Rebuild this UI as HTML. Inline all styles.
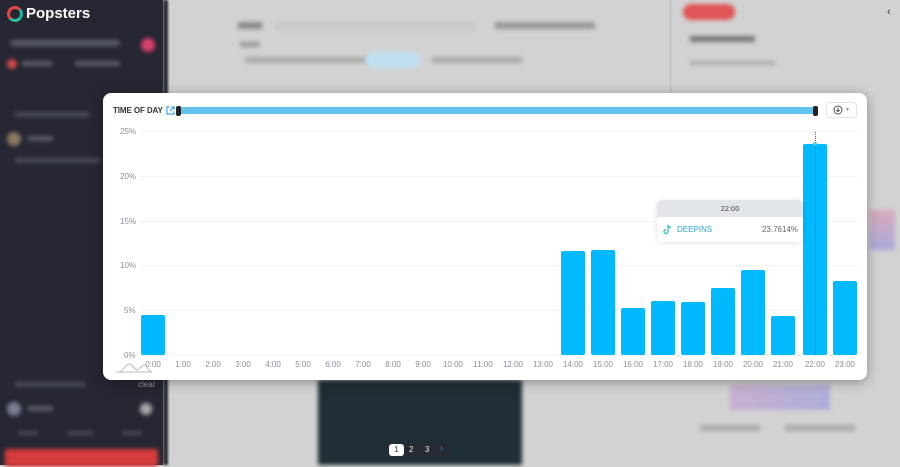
<!DOCTYPE html>
<html><head><meta charset="utf-8"><style>
*{margin:0;padding:0;box-sizing:border-box}
body{width:900px;height:465px;overflow:hidden;background:#d2d2d2;font-family:"Liberation Sans",sans-serif;position:relative}
.abs{position:absolute}
.blur{filter:blur(2px)}
.side{left:0;top:0;width:163px;height:465px;background:#262733}
.modal{left:103px;top:93px;width:764px;height:287px;background:#fff;border-radius:8px;box-shadow:0 2px 12px rgba(0,0,0,.35)}
.lbl{font-size:8px;color:#8a8f99}
.grid{height:0;border-top:1px dotted #e6e8ec;left:140px;width:718px}
.bar{background:#00b9ff;width:24px;border-radius:2px}
</style></head><body>
<div class="abs side"></div>
<div class="abs blur" style="left:10px;top:40px;width:110px;height:6px;background:#5a5c68;border-radius:3px"></div>
<div class="abs blur" style="left:141px;top:38px;width:14px;height:14px;background:#d9406e;border-radius:50%"></div>
<div class="abs blur" style="left:7px;top:59px;width:10px;height:10px;background:#d84b4b;border-radius:50%"></div>
<div class="abs blur" style="left:22px;top:61px;width:30px;height:5px;background:#5a5c68"></div>
<div class="abs blur" style="left:75px;top:61px;width:45px;height:5px;background:#5a5c68"></div>
<div class="abs blur" style="left:15px;top:112px;width:75px;height:5px;background:#4a4c58"></div>
<div class="abs blur" style="left:7px;top:132px;width:14px;height:14px;background:#8a7a60;border-radius:50%"></div>
<div class="abs blur" style="left:28px;top:136px;width:25px;height:5px;background:#5a5c68"></div>
<div class="abs blur" style="left:15px;top:158px;width:85px;height:5px;background:#4a4c58"></div>
<div class="abs blur" style="left:15px;top:382px;width:70px;height:5px;background:#4a4c58"></div>
<div class="abs blur" style="left:7px;top:402px;width:14px;height:14px;background:#7a7f90;border-radius:50%"></div>
<div class="abs blur" style="left:28px;top:406px;width:25px;height:5px;background:#5a5c68"></div>
<div class="abs blur" style="left:140px;top:403px;width:12px;height:12px;background:#aaa;border-radius:50%"></div>
<div class="abs blur" style="left:18px;top:431px;width:20px;height:4px;background:#4a4c58"></div>
<div class="abs blur" style="left:68px;top:431px;width:25px;height:4px;background:#4a4c58"></div>
<div class="abs blur" style="left:122px;top:431px;width:20px;height:4px;background:#4a4c58"></div>
<div class="abs blur" style="left:5px;top:449px;width:153px;height:18px;background:#d63c3c;border-radius:3px"></div>
<div class="abs" style="left:7px;top:6px;width:16px;height:16px;border-radius:50%;border:3px solid #e84545;border-right-color:#20b0a0;border-bottom-color:#2fbf9f"></div>
<div class="abs" style="left:26px;top:5px;color:#fff;font-weight:bold;font-size:15px">Popsters</div>
<div class="abs" style="left:163px;top:0;width:5px;height:465px;background:#2a2b35;filter:blur(1px)"></div>
<div class="abs blur" style="left:238px;top:22px;width:24px;height:7px;background:#888"></div>
<div class="abs blur" style="left:275px;top:22px;width:200px;height:8px;background:#c6c8ca"></div>
<div class="abs blur" style="left:495px;top:22px;width:100px;height:7px;background:#999"></div>
<div class="abs blur" style="left:240px;top:42px;width:20px;height:5px;background:#999"></div>
<div class="abs blur" style="left:245px;top:57px;width:170px;height:6px;background:#aaa"></div>
<div class="abs blur" style="left:365px;top:52px;width:55px;height:16px;background:#bfe0f0;border-radius:8px"></div>
<div class="abs blur" style="left:432px;top:57px;width:90px;height:6px;background:#aaa"></div>
<div class="abs" style="left:670px;top:0;width:1px;height:93px;background:#bbb"></div>
<div class="abs blur" style="left:683px;top:4px;width:52px;height:16px;background:#e05555;border-radius:8px"></div>
<div class="abs blur" style="left:690px;top:36px;width:65px;height:6px;background:#777"></div>
<div class="abs blur" style="left:690px;top:61px;width:85px;height:4px;background:#aaa"></div>
<div class="abs" style="left:887px;top:6px;font-size:11px;color:#333">‹</div>
<div class="abs blur" style="left:870px;top:210px;width:25px;height:40px;background:linear-gradient(#e090b0,#9090e0);opacity:.6"></div>
<div class="abs blur" style="left:730px;top:385px;width:100px;height:25px;background:linear-gradient(90deg,#c090d0,#8a8ae0);opacity:.5"></div>
<div class="abs blur" style="left:700px;top:425px;width:60px;height:6px;background:#aaa"></div>
<div class="abs blur" style="left:785px;top:425px;width:70px;height:6px;background:#aaa"></div>
<div class="abs blur" style="left:318px;top:380px;width:204px;height:85px;background:#1f2f35"></div>
<div class="abs" style="left:388px;top:443px;width:62px;height:14px;background:#262a33;border-radius:4px"></div>
<div class="abs" style="left:389px;top:444px;width:15px;height:12px;background:#fff;border-radius:3px;font-size:8px;text-align:center;line-height:12px;color:#333">1</div>
<div class="abs" style="left:409px;top:445px;font-size:8px;color:#eee">2</div>
<div class="abs" style="left:425px;top:445px;font-size:8px;color:#eee">3</div>
<div class="abs" style="left:440px;top:443px;font-size:10px;color:#1e90d0">›</div>
<div class="abs" style="left:138px;top:380px;font-size:8px;color:#999">clear</div>
<div class="abs modal"></div>
<div class="abs" style="left:113px;top:106px;font-size:8px;font-weight:bold;color:#333;letter-spacing:-0.1px">TIME OF DAY</div>
<svg class="abs" style="left:166px;top:106px" width="9" height="9" viewBox="0 0 10 10"><path d="M4 1H1v8h8V6M6 1h3v3M9 1L4.5 5.5" fill="none" stroke="#2a9de0" stroke-width="1.2"/></svg>
<div class="abs" style="left:178px;top:107px;width:640px;height:7px;background:#62c3ef"></div>
<div class="abs" style="left:176px;top:106px;width:5px;height:10px;background:#222;border-radius:2px"></div>
<div class="abs" style="left:813px;top:106px;width:5px;height:10px;background:#222;border-radius:2px"></div>
<div class="abs" style="left:826px;top:102px;width:31px;height:16px;border:1px solid #e2e4e8;border-radius:4px"></div>
<svg class="abs" style="left:833px;top:105px" width="10" height="10" viewBox="0 0 10 10"><circle cx="5" cy="5" r="4" fill="none" stroke="#555" stroke-width="1"/><path d="M5 2.5v4M3.3 5l1.7 1.7L6.7 5" fill="none" stroke="#555" stroke-width="1"/></svg>
<div class="abs" style="left:846px;top:106px;font-size:6px;color:#999">▾</div>
<div class="abs lbl" style="left:120px;top:127px">25%</div>
<div class="abs lbl" style="left:120px;top:172px">20%</div>
<div class="abs lbl" style="left:120px;top:217px">15%</div>
<div class="abs lbl" style="left:120px;top:261px">10%</div>
<div class="abs lbl" style="left:124px;top:306px">5%</div>
<div class="abs lbl" style="left:124px;top:351px">0%</div>
<div class="abs grid" style="top:131px"></div>
<div class="abs grid" style="top:176px"></div>
<div class="abs grid" style="top:221px"></div>
<div class="abs grid" style="top:265px"></div>
<div class="abs grid" style="top:310px"></div>
<div class="abs grid" style="top:355px"></div>
<div class="abs bar" style="left:141px;top:315px;height:40px"></div>
<div class="abs bar" style="left:561px;top:251px;height:104px"></div>
<div class="abs bar" style="left:591px;top:250px;height:105px"></div>
<div class="abs bar" style="left:621px;top:308px;height:47px"></div>
<div class="abs bar" style="left:651px;top:301px;height:54px"></div>
<div class="abs bar" style="left:681px;top:302px;height:53px"></div>
<div class="abs bar" style="left:711px;top:288px;height:67px"></div>
<div class="abs bar" style="left:741px;top:270px;height:85px"></div>
<div class="abs bar" style="left:771px;top:316px;height:39px"></div>
<div class="abs bar" style="left:803px;top:144px;height:211px"></div>
<div class="abs bar" style="left:833px;top:281px;height:74px"></div>
<div class="abs" style="left:815px;top:132px;height:223px;border-left:1px dotted #1a7fb0"></div>
<div class="abs" style="left:813px;top:142px;width:4px;height:4px;border-radius:50%;background:#58c8f0"></div>
<div id="xl"></div>
<div class="abs" style="left:657px;top:200px;width:146px;height:42px;background:#fff;border-radius:5px;box-shadow:0 1px 6px rgba(0,0,0,.12);overflow:hidden">
<div style="height:17px;background:#e2e5e9;font-size:7.5px;color:#444;text-align:center;line-height:17px">22:00</div>
<svg class="abs" style="left:6px;top:24px" width="9" height="11" viewBox="0 0 9 11"><path d="M5 1v6.5a2 2 0 1 1-2-2M5 1c.3 1.5 1.3 2.3 3 2.5" fill="none" stroke="#40c0d0" stroke-width="1.4"/></svg>
<div class="abs" style="left:20px;top:25px;font-size:8px;color:#28a8e0">DEEPINS</div>
<div class="abs" style="right:5px;top:25px;font-size:8px;color:#666">23.7614%</div>
</div>
<svg class="abs" style="left:116px;top:361px" width="36" height="12" viewBox="0 0 36 12"><path d="M0 11h36M3 11c4 0 6-8 10-8s5 6 8 6 4-5 7-5 4 7 8 7" fill="none" stroke="#bbb" stroke-width="1"/></svg>
<script>
var h='';for(var i=0;i<24;i++){var c=153+i*30;if(i==22)c=815;if(i==23)c=845;h+='<div class="abs lbl" style="left:'+(c-15)+'px;width:30px;text-align:center;top:360px">'+i+':00</div>';}
document.getElementById('xl').outerHTML=h;
</script>
</body></html>
